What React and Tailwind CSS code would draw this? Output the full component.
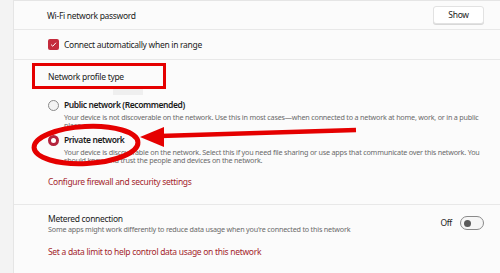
import React from "react";

function Row({ children, className = "" }) {
    return <div className={`border-b border-[#e8e8e8] ${className}`}>{children}</div>;
}

const desc = "text-[7.2px] text-[#6a6a6a] leading-[8px] tracking-[-0.2px]";

export default function App() {
    return (
        <div className="relative w-[500px] h-[273px] overflow-hidden bg-[#f3f3f3] flex font-['Noto_Sans',sans-serif] text-[#1b1b1b] text-[8.5px] tracking-[-0.3px]">
            <div className="w-[13px] shrink-0" />
            <div className="flex-1 bg-[#fbfbfb] border-l border-t border-[#e5e5e5]">
                <Row className="h-[29px] flex items-center justify-between pl-[33px] pr-[16px]">
                    <span className="leading-[12px] mt-[2px]">Wi-Fi network password</span>
                    <button className="w-[51px] h-[18px] bg-white border border-[#e2e2e2] rounded-[3px] shadow-[0_1px_0_#d8d8d8]">
                        Show
                    </button>
                </Row>
                <Row className="h-[30px] flex items-center gap-[5px] pl-[34px]">
                    <span className="w-[11px] h-[11px] rounded-[2px] bg-[#c42b3c] flex items-center justify-center">
                        <svg width="7" height="7" viewBox="0 0 10 10">
                            <path d="M1.5 5.2 L4 7.5 L8.5 2.5" stroke="white" strokeWidth="1.4" fill="none" />
                        </svg>
                    </span>
                    <span className="leading-[12px]">Connect automatically when in range</span>
                </Row>
                <Row className="pl-[34px] pr-[16px] pt-[11px] pb-[16px]">
                    <div className="leading-[12px]">Network profile type</div>
                    <div className="flex gap-[5px] mt-[16px]">
                        <span className="mt-[1px] w-[11px] h-[11px] rounded-full border border-[#8a8a8a] bg-[#f3f3f3] shrink-0" />
                        <div>
                            <div className="font-semibold leading-[12px] tracking-[-0.4px]">Public network (Recommended)</div>
                            <div className={`${desc} mt-[2px]`}>
                                Your device is not discoverable on the network. Use this in most cases—when connected to a network at home, work, or in a public place.
                            </div>
                        </div>
                    </div>
                    <div className="flex gap-[5px] mt-[5px]">
                        <span className="mt-[1px] w-[11px] h-[11px] rounded-full border-[3px] border-[#b4233c] bg-white shrink-0" />
                        <div>
                            <div className="font-semibold leading-[12px] tracking-[-0.4px]">Private network</div>
                            <div className={`${desc} mt-[2px]`}>
                                Your device is discoverable on the network. Select this if you need file sharing or use apps that communicate over this network. You should know and trust the people and devices on the network.
                            </div>
                        </div>
                    </div>
                    <div className="mt-[12px] leading-[12px] text-[#a4262c]">Configure firewall and security settings</div>
                </Row>
                <div className="pl-[34px] pr-[16px] pt-[8px]">
                    <div className="flex items-center justify-between">
                        <div>
                            <div className="leading-[12px]">Metered connection</div>
                            <div className={desc}>
                                Some apps might work differently to reduce data usage when you're connected to this network
                            </div>
                        </div>
                        <div className="flex items-center gap-[8px]">
                            <span className="leading-[12px]">Off</span>
                            <span className="w-[24px] h-[14px] rounded-full border border-[#8a8a8a] bg-[#f6f6f6] flex items-center pl-[3px]">
                                <span className="w-[7px] h-[7px] rounded-full bg-[#5a5a5a]" />
                            </span>
                        </div>
                    </div>
                    <div className="mt-[13px] leading-[12px] text-[#a4262c]">Set a data limit to help control data usage on this network</div>
                </div>
            </div>

            {/* annotations */}
            <div className="absolute left-[113px] top-[88px] w-[30px] h-[7px] bg-[#efefef]" />
            <div className="absolute left-[32px] top-[63px] w-[134px] h-[26px] border-[3px] border-[#e50000]" />
            <svg className="absolute left-0 top-0" width="500" height="273" viewBox="0 0 500 273">
                <ellipse cx="86" cy="145" rx="52" ry="18.5" fill="none" stroke="#e50000" strokeWidth="5" transform="rotate(-3 86 145)" />
                <line x1="356" y1="130" x2="160" y2="136" stroke="#e50000" strokeWidth="4.5" />
                <polygon points="140,137 164,127 164,147" fill="#e50000" />
            </svg>
        </div>
    );
}
